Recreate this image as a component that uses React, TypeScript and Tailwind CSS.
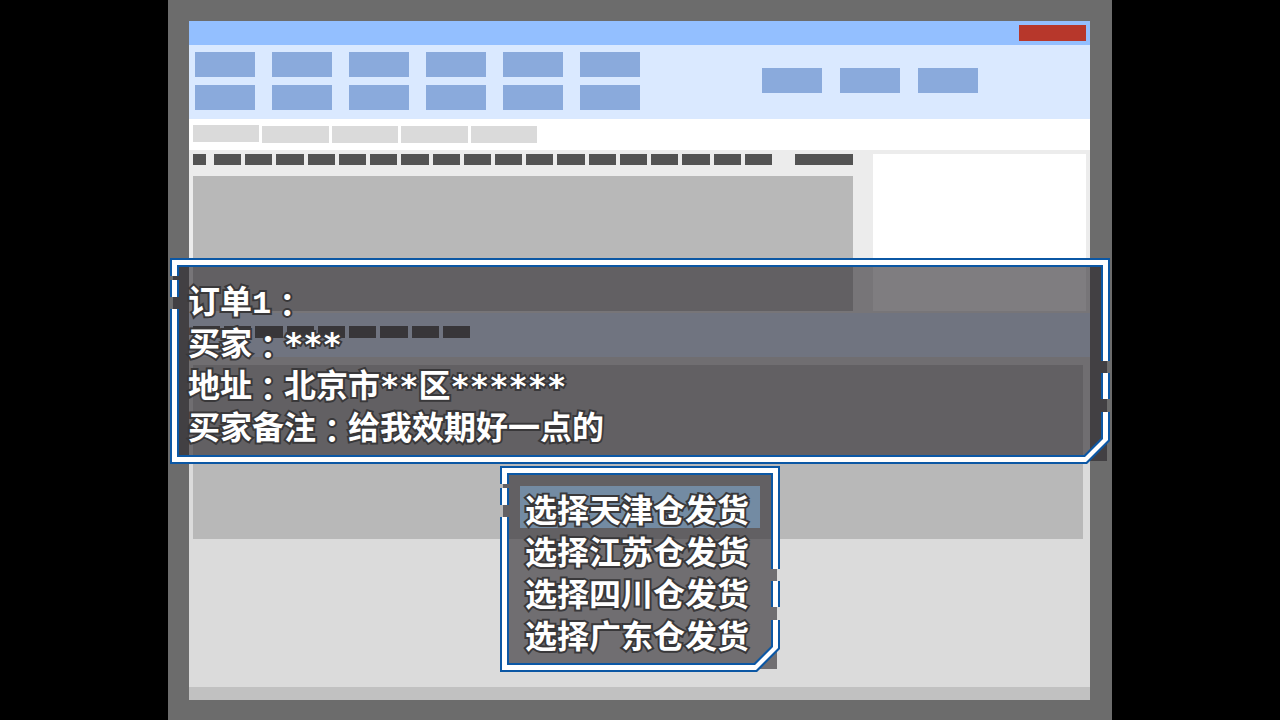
import { useState, type ReactNode } from 'react'
import clsx from 'clsx'

const warehouses = ['天津', '江苏', '四川', '广东']

// Broken double border with a cut corner at the bottom right
function Frame({ className, children }: { className?: string; children: ReactNode }) {
  return (
    <div className={clsx('relative', className)}>
      <div className="absolute inset-[3px] bg-[rgba(38,34,39,0.59)]" />
      <div className="pointer-events-none absolute inset-0" aria-hidden="true">
        {/* Blue edges */}
        <div className="absolute inset-x-0 top-0 h-[9px] bg-[#0b57a4]" />
        <div className="absolute bottom-0 left-0 right-7 h-[9px] bg-[#0b57a4]" />
        <div className="absolute left-0 top-0 h-[18px] w-[9px] bg-[#0b57a4]" />
        <div className="absolute left-0 top-[22px] h-[17px] w-[9px] bg-[#0b57a4]" />
        <div className="absolute bottom-0 left-0 top-[51px] w-[9px] bg-[#0b57a4]" />
        <div className="absolute bottom-[103px] right-0 top-0 w-[9px] bg-[#0b57a4]" />
        <div className="absolute bottom-[65px] right-0 h-[26px] w-[9px] bg-[#0b57a4]" />
        <div className="absolute bottom-7 right-0 h-6 w-[9px] bg-[#0b57a4]" />
        {/* White core */}
        <div className="absolute inset-x-[2px] top-[2px] h-[5px] bg-white" />
        <div className="absolute bottom-[2px] left-[2px] right-7 h-[5px] bg-white" />
        <div className="absolute left-[2px] top-[2px] h-4 w-[5px] bg-white" />
        <div className="absolute left-[2px] top-[22px] h-[17px] w-[5px] bg-white" />
        <div className="absolute bottom-[2px] left-[2px] top-[51px] w-[5px] bg-white" />
        <div className="absolute bottom-[103px] right-[2px] top-[2px] w-[5px] bg-white" />
        <div className="absolute bottom-[65px] right-[2px] h-[26px] w-[5px] bg-white" />
        <div className="absolute bottom-7 right-[2px] h-6 w-[5px] bg-white" />
        <svg className="absolute bottom-0 right-0" width="28" height="28" viewBox="0 0 28 28">
          <polygon points="19,0 28,0 28,5 5,28 0,28 0,19 2,19 19,2" fill="#0b57a4" />
          <polygon points="21,0 26,0 26,4 4,26 0,26 0,21 3,21 21,3" fill="#fff" />
        </svg>
      </div>
      <div className="relative">{children}</div>
    </div>
  )
}

function Stars({ count }: { count: number }) {
  return <span className="font-['DejaVu_Sans_Mono',monospace] leading-none">{'*'.repeat(count)}</span>
}

function Colon() {
  return <span className="align-[-4px] font-['Noto_Sans_CJK_TC',sans-serif] leading-none">：</span>
}

function Blocks({ count, className }: { count: number; className: string }) {
  return (
    <>
      {Array.from({ length: count }, (_, i) => (
        <div key={i} className={className} />
      ))}
    </>
  )
}

function BrowserWindow() {
  return (
    <div className="flex flex-1 flex-col bg-[#dbdbdb]">
      {/* Title bar */}
      <div className="flex h-6 items-center justify-end bg-[#93bfff] pr-1">
        <button type="button" aria-label="关闭" className="h-4 w-[67px] bg-[#b7372b]" />
      </div>

      {/* Toolbar */}
      <div className="flex h-[74px] items-start bg-[#dae9ff] pl-[6px] pt-[7px]">
        <div className="grid grid-cols-6 gap-x-[17px] gap-y-2">
          <Blocks count={12} className="h-[25px] w-[60px] bg-[#8aaadc]" />
        </div>
        <div className="ml-[122px] mt-4 flex gap-[18px]">
          <Blocks count={3} className="h-[25px] w-[60px] bg-[#8aaadc]" />
        </div>
      </div>

      {/* Tabs */}
      <div className="flex h-[31px] bg-white pl-1 pt-[6px]">
        <div className="flex w-[344px] gap-[3px]">
          <div className="h-[17px] flex-1 bg-[#dadada]" />
          <Blocks count={4} className="mt-px h-[17px] flex-1 bg-[#dadada]" />
        </div>
      </div>

      {/* Content */}
      <div className="flex gap-5 bg-[#ececec] px-1 pb-[2px] pt-1">
        <div className="flex flex-1 flex-col gap-[11px]">
          <div className="flex">
            <div className="h-[11px] w-[13px] bg-[#535353]" />
            <div className="ml-2 flex flex-1 gap-1">
              <Blocks count={18} className="h-[11px] flex-1 bg-[#535353]" />
            </div>
            <div className="ml-[23px] h-[11px] w-[58px] bg-[#535353]" />
          </div>
          <div className="h-[135px] bg-[#b8b8b8]" />
        </div>
        <div className="w-[213px] bg-white" />
      </div>
      <div className="h-11 bg-[#dae9ff] pl-1 pt-[13px]">
        <div className="flex w-[277px] gap-1">
          <Blocks count={9} className="h-3 flex-1 bg-[#535353]" />
        </div>
      </div>
      <div className="ml-1 mr-[7px] mt-2 h-[174px] bg-[#b8b8b8]" />

      {/* Status bar */}
      <div className="mt-auto h-[13px] bg-[#c1c1c1]" />
    </div>
  )
}

export default function App() {
  const [selected, setSelected] = useState(0)

  return (
    <div className="flex min-h-screen justify-center bg-black">
      <main className="relative flex w-full max-w-[944px] flex-col bg-[#6c6c6c] pb-5 pl-[21px] pr-[22px] pt-[21px]">
        <BrowserWindow />

        <div className="absolute inset-x-[2px] top-[258px] flex flex-col items-center gap-[2px] font-['Liberation_Mono','Noto_Sans_CJK_SC',monospace] text-[32px] font-bold text-white [-webkit-text-stroke:4px_#39383a] [paint-order:stroke_fill]">
          <Frame className="w-full">
            <div className="pb-3 pl-[18px] pt-[26px] [&>p]:h-[42px] [&>p]:leading-[42px]">
              <p>订单1<Colon /></p>
              <p>买家<Colon /><Stars count={3} /></p>
              <p>地址<Colon />北京市<Stars count={2} />区<Stars count={6} /></p>
              <p>买家备注<Colon />给我效期好一点的</p>
            </div>
          </Frame>

          <Frame>
            <div className="flex flex-col px-5 pb-[18px] pt-5">
              {warehouses.map((name, i) => (
                <button
                  key={name}
                  type="button"
                  onClick={() => setSelected(i)}
                  className={clsx(
                    'h-[42px] w-60 pl-[5px] pt-[14px] text-left leading-7 whitespace-nowrap',
                    selected === i && 'bg-[#738ba3]'
                  )}
                >
                  选择{name}仓发货
                </button>
              ))}
            </div>
          </Frame>
        </div>
      </main>
    </div>
  )
}
